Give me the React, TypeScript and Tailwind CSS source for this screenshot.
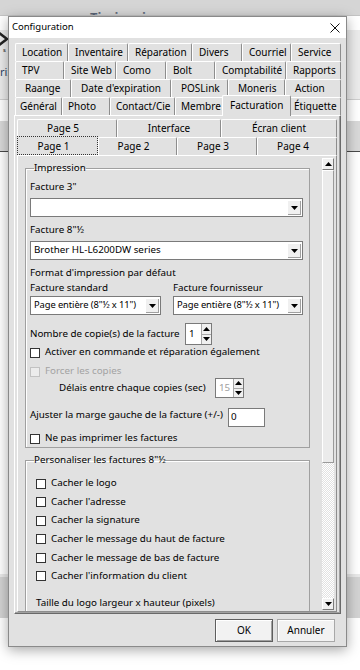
import clsx from 'clsx';

type TabDef = { label: string; w: string };

const row1: TabDef[] = [
  { label: 'Location', w: 'w-[53px]' },
  { label: 'Inventaire', w: 'w-[60px]' },
  { label: 'Réparation', w: 'w-[64px]' },
  { label: 'Divers', w: 'w-[50px]' },
  { label: 'Courriel', w: 'w-[49px]' },
  { label: 'Service', w: 'w-[50px]' },
];
const row2: TabDef[] = [
  { label: 'TPV', w: 'w-[49px]' },
  { label: 'Site Web', w: 'w-[52px]' },
  { label: 'Como', w: 'w-[50px]' },
  { label: 'Bolt', w: 'w-[49px]' },
  { label: 'Comptabilité', w: 'w-[71px]' },
  { label: 'Rapports', w: 'w-[55px]' },
];
const row3: TabDef[] = [
  { label: 'Raange', w: 'w-[56px]' },
  { label: "Date d'expiration", w: 'w-[100px]' },
  { label: 'POSLink', w: 'w-[57px]' },
  { label: 'Moneris', w: 'w-[57px]' },
  { label: 'Action', w: 'w-[56px]' },
];

const tabBase = 'h-[18px] flex items-center shrink-0 whitespace-nowrap border-t border-l border-r border-t-white border-l-white border-r-[#8d8d8d] rounded-t-[2px] bg-[#e1e1e1]';

function TabRow({ tabs, pad }: { tabs: TabDef[]; pad: string }) {
  return (
    <div className="flex ml-px">
      {tabs.map((t) => (
        <div key={t.label} className={clsx(tabBase, t.w, pad)}>{t.label}</div>
      ))}
    </div>
  );
}

function Tri({ up, color = '#000' }: { up?: boolean; color?: string }) {
  return (
    <svg width="7" height="4" viewBox="0 0 7 4">
      <path d={up ? 'M0 4h7L3.5 0z' : 'M0 0h7L3.5 4z'} fill={color} />
    </svg>
  );
}

function Combo({ value, w, small }: { value?: string; w: string; small?: boolean }) {
  return (
    <div className={clsx('h-[19px] flex border border-[#7a7a7a] bg-white', w)}>
      <div className={clsx('flex-1 pl-[3px] flex items-center whitespace-nowrap overflow-hidden', small && 'text-[9.4px] tracking-[-0.1px]')}>{value}</div>
      <div className="w-[14px] m-px flex items-center justify-center bg-[#f0f0f0] border-l border-t border-white shadow-[inset_-1px_-1px_0_#a0a0a0]">
        <Tri />
      </div>
    </div>
  );
}

function Spin({ value, w, h, disabled }: { value: string; w: string; h: string; disabled?: boolean }) {
  return (
    <div className={clsx('flex border border-[#7a7a7a] bg-white', w, h)}>
      <div className={clsx('flex-1 pl-[3px] flex items-center', disabled && 'text-[#a0a0a0]')}>{value}</div>
      <div className="w-[10px] flex flex-col">
        <div className="flex-1 flex items-center justify-center bg-[#f0f0f0] border-l border-b border-[#a8a8a8]"><Tri up /></div>
        <div className="flex-1 flex items-center justify-center bg-[#f0f0f0] border-l border-[#a8a8a8]"><Tri /></div>
      </div>
    </div>
  );
}

function Check({ label, disabled }: { label: string; disabled?: boolean }) {
  return (
    <div className="flex items-center h-[15px] whitespace-nowrap">
      <span className={clsx('w-[10px] h-[10px] shrink-0 border', disabled ? 'border-[#c2c2c2] bg-[#ececec]' : 'border-[#333] bg-white')} />
      <span className={clsx('ml-[5px]', disabled && 'text-[#a3a3a3]')}>{label}</span>
    </div>
  );
}

export default function App() {
  return (
    <div className="relative w-[360px] h-[670px] overflow-hidden bg-white font-['Noto_Sans',sans-serif] text-[10px] text-black">
      {/* application behind the dialog */}
      <div className="h-[16px] bg-[#d5d5d5] border-b border-[#c4c4c4] pl-[90px] pt-[11px] text-[13px] font-bold leading-[13px] text-[#5b6577] overflow-hidden">Tissir caisse</div>
      <div className="h-[69px] bg-[#ececec] relative">
        <svg width="10" height="24" viewBox="0 0 10 24" className="mt-[14px]">
          <path d="M-2 2l9 7-9 7" stroke="#222" strokeWidth="2.5" fill="none" />
          <text x="3" y="22" fontSize="6" fill="#222">s</text>
        </svg>
        <div className="mt-[12px] text-[11px] text-[#2e4466] leading-[12px]">rix</div>
      </div>
      <div className="h-[22px] bg-white border-t border-[#cfcfcf]" />
      <div className="h-[31px] bg-[#d9d9d9] border-b border-[#4a4a4a]" />
      <div className="h-[422px] bg-white" />
      <div className="h-[44px] bg-[#d3d3d3] border-t-[3px] border-[#e9e9e9]" />

      {/* dialog */}
      <div className="absolute left-[8px] top-[16px] w-[339px] h-[631px] border border-[#8a8a8a] bg-[#e1e1e1] shadow-[0_3px_12px_rgba(0,0,0,0.35)] flex flex-col">
        <div className="h-[21px] bg-white flex items-center justify-between pl-[3px] pr-[6px] text-[9.5px]">
          <span>Configuration</span>
          <svg width="10" height="10" viewBox="0 0 10 10">
            <path d="M0.5 0.5l9 9M9.5 0.5l-9 9" stroke="#111" strokeWidth="1" />
          </svg>
        </div>

        <div className="pl-[5px] pt-[5px]">
          <TabRow tabs={row1} pad="pl-[6px]" />
          <TabRow tabs={row2} pad="pl-[6px]" />
          <TabRow tabs={row3} pad="pl-[9px]" />
          <div className="flex ml-px">
            <div className={clsx(tabBase, 'w-[47px] pl-[4px]')}>Général</div>
            <div className={clsx(tabBase, 'w-[48px] pl-[5px]')}>Photo</div>
            <div className={clsx(tabBase, 'w-[65px] pl-[5px]')}>Contact/Cie</div>
            <div className={clsx(tabBase, 'w-[49px] pl-[5px]')}>Membre</div>
            <div className="relative z-10 -mt-[2px] h-[21px] -mx-[2px] w-[69px] shrink-0 flex items-start pt-[2px] pl-[7px] whitespace-nowrap bg-[#e1e1e1] border-t border-l border-r border-t-white border-l-white border-r-[#8d8d8d] rounded-t-[2px]">Facturation</div>
            <div className={clsx(tabBase, 'w-[52px] pl-[4px]')}>Étiquette</div>
          </div>

          {/* tab page */}
          <div className="-mt-px w-[327px] h-[499px] border border-t-white border-l-white border-r-[#696969] border-b-[#696969] shadow-[inset_-1px_-1px_0_#a0a0a0] pl-[2px] pt-[3px]">
            <div className="flex">
              <div className="w-[100px] h-[18px] flex items-center justify-center pr-[8px] border-t border-l border-r border-t-white border-l-white border-r-[#8d8d8d] rounded-t-[2px]">Page 5</div>
              <div className="w-[104px] h-[18px] flex items-center justify-center border-t border-l border-r border-t-white border-l-white border-r-[#8d8d8d] rounded-t-[2px]">Interface</div>
              <div className="w-[116px] h-[18px] flex items-center justify-center border-t border-l border-r border-t-white border-l-white border-r-[#8d8d8d] rounded-t-[2px]">Écran client</div>
            </div>
            <div className="flex">
              <div className="relative z-10 w-[81px] h-[19px] -mt-px flex items-start pt-[2px] justify-center pr-[8px] border border-dotted border-[#333] bg-[#e1e1e1]">Page 1</div>
              <div className="w-[79px] h-[18px] flex items-center justify-center pr-[8px] border-t border-l border-r border-t-white border-l-white border-r-[#8d8d8d] rounded-t-[2px]">Page 2</div>
              <div className="w-[80px] h-[18px] flex items-center justify-center pr-[8px] border-t border-l border-r border-t-white border-l-white border-r-[#8d8d8d] rounded-t-[2px]">Page 3</div>
              <div className="w-[80px] h-[18px] flex items-center justify-center pr-[8px] border-t border-l border-r border-t-white border-l-white border-r-[#8d8d8d] rounded-t-[2px]">Page 4</div>
            </div>

            {/* inner page */}
            <div className="w-[320px] h-[457px] border border-t-white border-l-white border-r-[#8d8d8d] border-b-[#8d8d8d] flex text-[9.8px]">
              <div className="flex-1 overflow-hidden pt-[6px]">
                {/* Impression */}
                <fieldset className="ml-[7px] w-[285px] border border-[#a0a0a0] shadow-[inset_1px_1px_0_#fff] pl-[4px] pb-px">
                  <legend className="ml-[4px] leading-[12px]">Impression</legend>
                  <div className="mt-[5px] h-[15px] leading-[15px]">Facture 3"</div>
                  <div className="mt-[4px]"><Combo w="w-[273px]" /></div>
                  <div className="mt-[5px] h-[15px] leading-[15px]">Facture 8"½</div>
                  <div className="mt-[4px]"><Combo w="w-[273px]" value="Brother HL-L6200DW series" /></div>
                  <div className="mt-[5px] h-[15px] leading-[15px]">Format d'impression par défaut</div>
                  <div className="flex h-[15px] leading-[15px]">
                    <span className="w-[143px]">Facture standard</span>
                    <span>Facture fournisseur</span>
                  </div>
                  <div className="mt-px flex">
                    <Combo w="w-[131px]" small value={'Page entière (8"½ x 11")'} />
                    <div className="ml-[12px]"><Combo w="w-[130px]" small value={'Page entière (8"½ x 11")'} /></div>
                  </div>
                  <div className="mt-[8px] flex items-center h-[22px]">
                    <span className="w-[155px] whitespace-nowrap">Nombre de copie(s) de la facture</span>
                    <Spin value="1" w="w-[27px]" h="h-[22px]" />
                  </div>
                  <Check label="Activer en commande et réparation également" />
                  <div className="mt-[4px]"><Check label="Forcer les copies" disabled /></div>
                  <div className="flex items-center h-[20px] -mt-px pl-[29px]">
                    <span className="w-[156px] whitespace-nowrap">Délais entre chaque copies (sec)</span>
                    <Spin value="15" w="w-[29px]" h="h-[20px]" disabled />
                  </div>
                  <div className="mt-[10px] flex items-start h-[19px]">
                    <span className="w-[198px] whitespace-nowrap -mt-px leading-[15px]">Ajuster la marge gauche de la facture (+/-)</span>
                    <div className="w-[37px] h-[19px] border border-[#7a7a7a] bg-white pl-[2px] flex items-center">0</div>
                  </div>
                  <div className="mt-[4px]"><Check label="Ne pas imprimer les factures" /></div>
                </fieldset>

                {/* Personaliser */}
                <fieldset className="mt-[6px] ml-[7px] w-[285px] h-[200px] border border-[#a0a0a0] shadow-[inset_1px_1px_0_#fff] pl-[10px]">
                  <legend className="-ml-[2px] leading-[12px]">Personaliser les factures 8"½</legend>
                  <div className="mt-[10px] flex flex-col gap-[3.6px]">
                    <Check label="Cacher le logo" />
                    <Check label="Cacher l'adresse" />
                    <Check label="Cacher la signature" />
                    <Check label="Cacher le message du haut de facture" />
                    <Check label="Cacher le message de bas de facture" />
                    <Check label="Cacher l'information du client" />
                  </div>
                  <div className="mt-[11px] h-[15px] leading-[15px] whitespace-nowrap">Taille du logo largeur x hauteur (pixels)</div>
                </fieldset>
              </div>

              {/* scrollbar */}
              <div className="w-[12px] mt-[2px] mb-px mr-[2px] flex flex-col">
                <div className="h-[12px] flex items-center justify-center bg-[#f0f0f0] border border-t-white border-l-white border-r-[#7a7a7a] border-b-[#7a7a7a]"><Tri up /></div>
                <div className="h-[293px] bg-[#ebebeb] border border-t-white border-l-white border-r-[#9a9a9a] border-b-[#9a9a9a]" />
                <div className="flex-1 bg-[image:repeating-conic-gradient(#ffffff_0_25%,#e2e2e2_0_50%)] bg-[length:2px_2px]" />
                <div className="h-[12px] flex items-center justify-center bg-[#f0f0f0] border border-t-white border-l-white border-r-[#7a7a7a] border-b-[#7a7a7a]"><Tri /></div>
              </div>
            </div>
          </div>
        </div>

        {/* buttons */}
        <div className="mt-[5px] flex justify-end gap-[4px] pr-[11px]">
          <button className="w-[58px] h-[23px] bg-[#f2f2f2] border border-[#5e5e5e] shadow-[inset_1px_1px_0_#fff,inset_-1px_-1px_0_#a0a0a0]">OK</button>
          <button className="w-[58px] h-[23px] bg-[#f2f2f2] border border-[#a8a8a8] shadow-[inset_1px_1px_0_#fff]">Annuler</button>
        </div>
      </div>
    </div>
  );
}
